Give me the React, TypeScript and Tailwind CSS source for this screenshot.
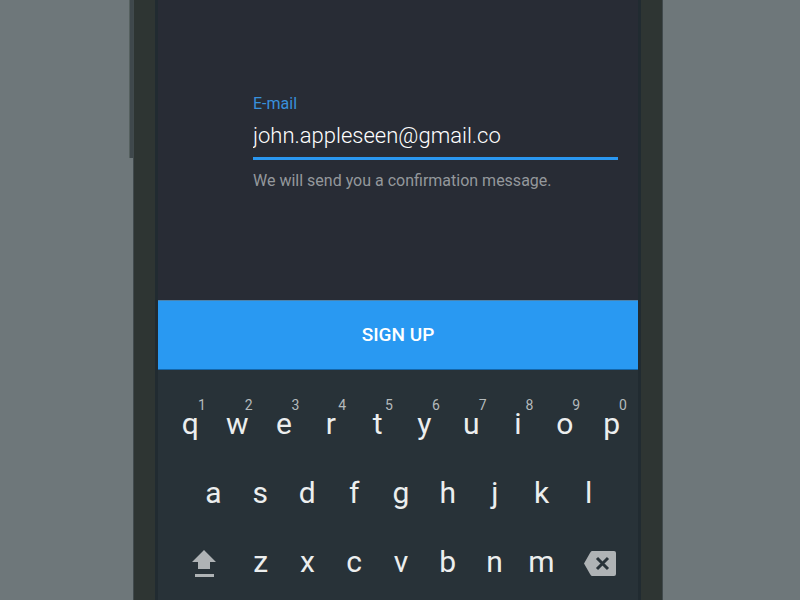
const numberRow = [
  ['q', '1'], ['w', '2'], ['e', '3'], ['r', '4'], ['t', '5'],
  ['y', '6'], ['u', '7'], ['i', '8'], ['o', '9'], ['p', '0'],
];
const homeRow = ['a', 's', 'd', 'f', 'g', 'h', 'j', 'k', 'l'];
const bottomRow = ['z', 'x', 'c', 'v', 'b', 'n', 'm'];

function Key({ letter, hint }: { letter: string; hint?: string }) {
  return (
    <button type="button" className="relative col-span-2 flex h-[69px] items-center justify-center">
      {letter}
      {hint && (
        <span className="absolute right-2 top-2 text-sm leading-4 text-[#b4babc]">{hint}</span>
      )}
    </button>
  );
}

function SignUpForm() {
  return (
    <form className="flex flex-col" onSubmit={(e) => e.preventDefault()}>
      <div className="flex h-[300px] flex-col bg-[#282c35] pl-[95px] pr-5 pt-[94px]">
        <label htmlFor="email" className="text-base leading-5 text-[#3890dc]">E-mail</label>
        <input
          id="email"
          type="email"
          defaultValue="john.appleseen@gmail.co"
          aria-describedby="email-help"
          className="h-[46px] w-full border-b-[3px] border-[#2a97f0] bg-transparent text-[22px] font-light leading-7 text-white outline-none"
        />
        <p id="email-help" className="mt-[11px] text-base leading-5 text-[#94989c]">
          We will send you a confirmation message.
        </p>
      </div>
      <button
        type="submit"
        className="h-[70px] border-b border-t border-b-[#1467ab] border-t-[#4c83ad] bg-[#2999f2] text-[19px] font-medium text-white"
      >
        SIGN UP
      </button>
    </form>
  );
}

function Keyboard() {
  return (
    <div className="flex-1 bg-[#283238] pl-[9px] pr-[3px] pt-[19px] text-[30px] leading-9 text-[#eceeee]">
      <div className="grid grid-cols-[repeat(20,minmax(0,1fr))]">
        {numberRow.map(([letter, hint]) => <Key key={letter} letter={letter} hint={hint} />)}
      </div>
      <div className="grid grid-cols-[repeat(18,minmax(0,1fr))] px-[23px]">
        {homeRow.map((letter) => <Key key={letter} letter={letter} />)}
      </div>
      <div className="grid grid-cols-[repeat(20,minmax(0,1fr))]">
        <button type="button" aria-label="Shift" className="col-span-3 flex items-center justify-center pl-1 pt-1">
          <svg width="24" height="27" viewBox="0 0 24 27" fill="#afb3b5">
            <path d="M12 0 24 12H18V19H6V12H0Z" />
            <path d="M3 24H22V27H3Z" />
          </svg>
        </button>
        {bottomRow.map((letter) => <Key key={letter} letter={letter} />)}
        <button type="button" aria-label="Delete" className="col-span-3 flex items-center justify-center pt-1">
          <svg width="32" height="25" viewBox="0 0 32 25">
            <path d="M8 0H30Q32 0 32 2V23Q32 25 30 25H8Q7 25 6 23L0 12.5 6 2Q7 0 8 0Z" fill="#afb3b5" />
            <path d="M13 7 24 18M24 7 13 18" stroke="#283238" strokeWidth="3" />
          </svg>
        </button>
      </div>
    </div>
  );
}

export default function App() {
  return (
    <main className="flex h-screen justify-center overflow-hidden bg-[#6e777a] pr-2 font-[Roboto,sans-serif]">
      <div className="h-[158px] w-1 border-l border-[#55605f] bg-[#3f484c]" />
      <div className="flex w-[530px] border-x border-[#414a4d] bg-[#2e3533] px-[21px]">
        <div className="flex min-w-0 flex-1 flex-col border-x-[3px] border-[#212b31]">
          <SignUpForm />
          <Keyboard />
        </div>
      </div>
    </main>
  );
}
